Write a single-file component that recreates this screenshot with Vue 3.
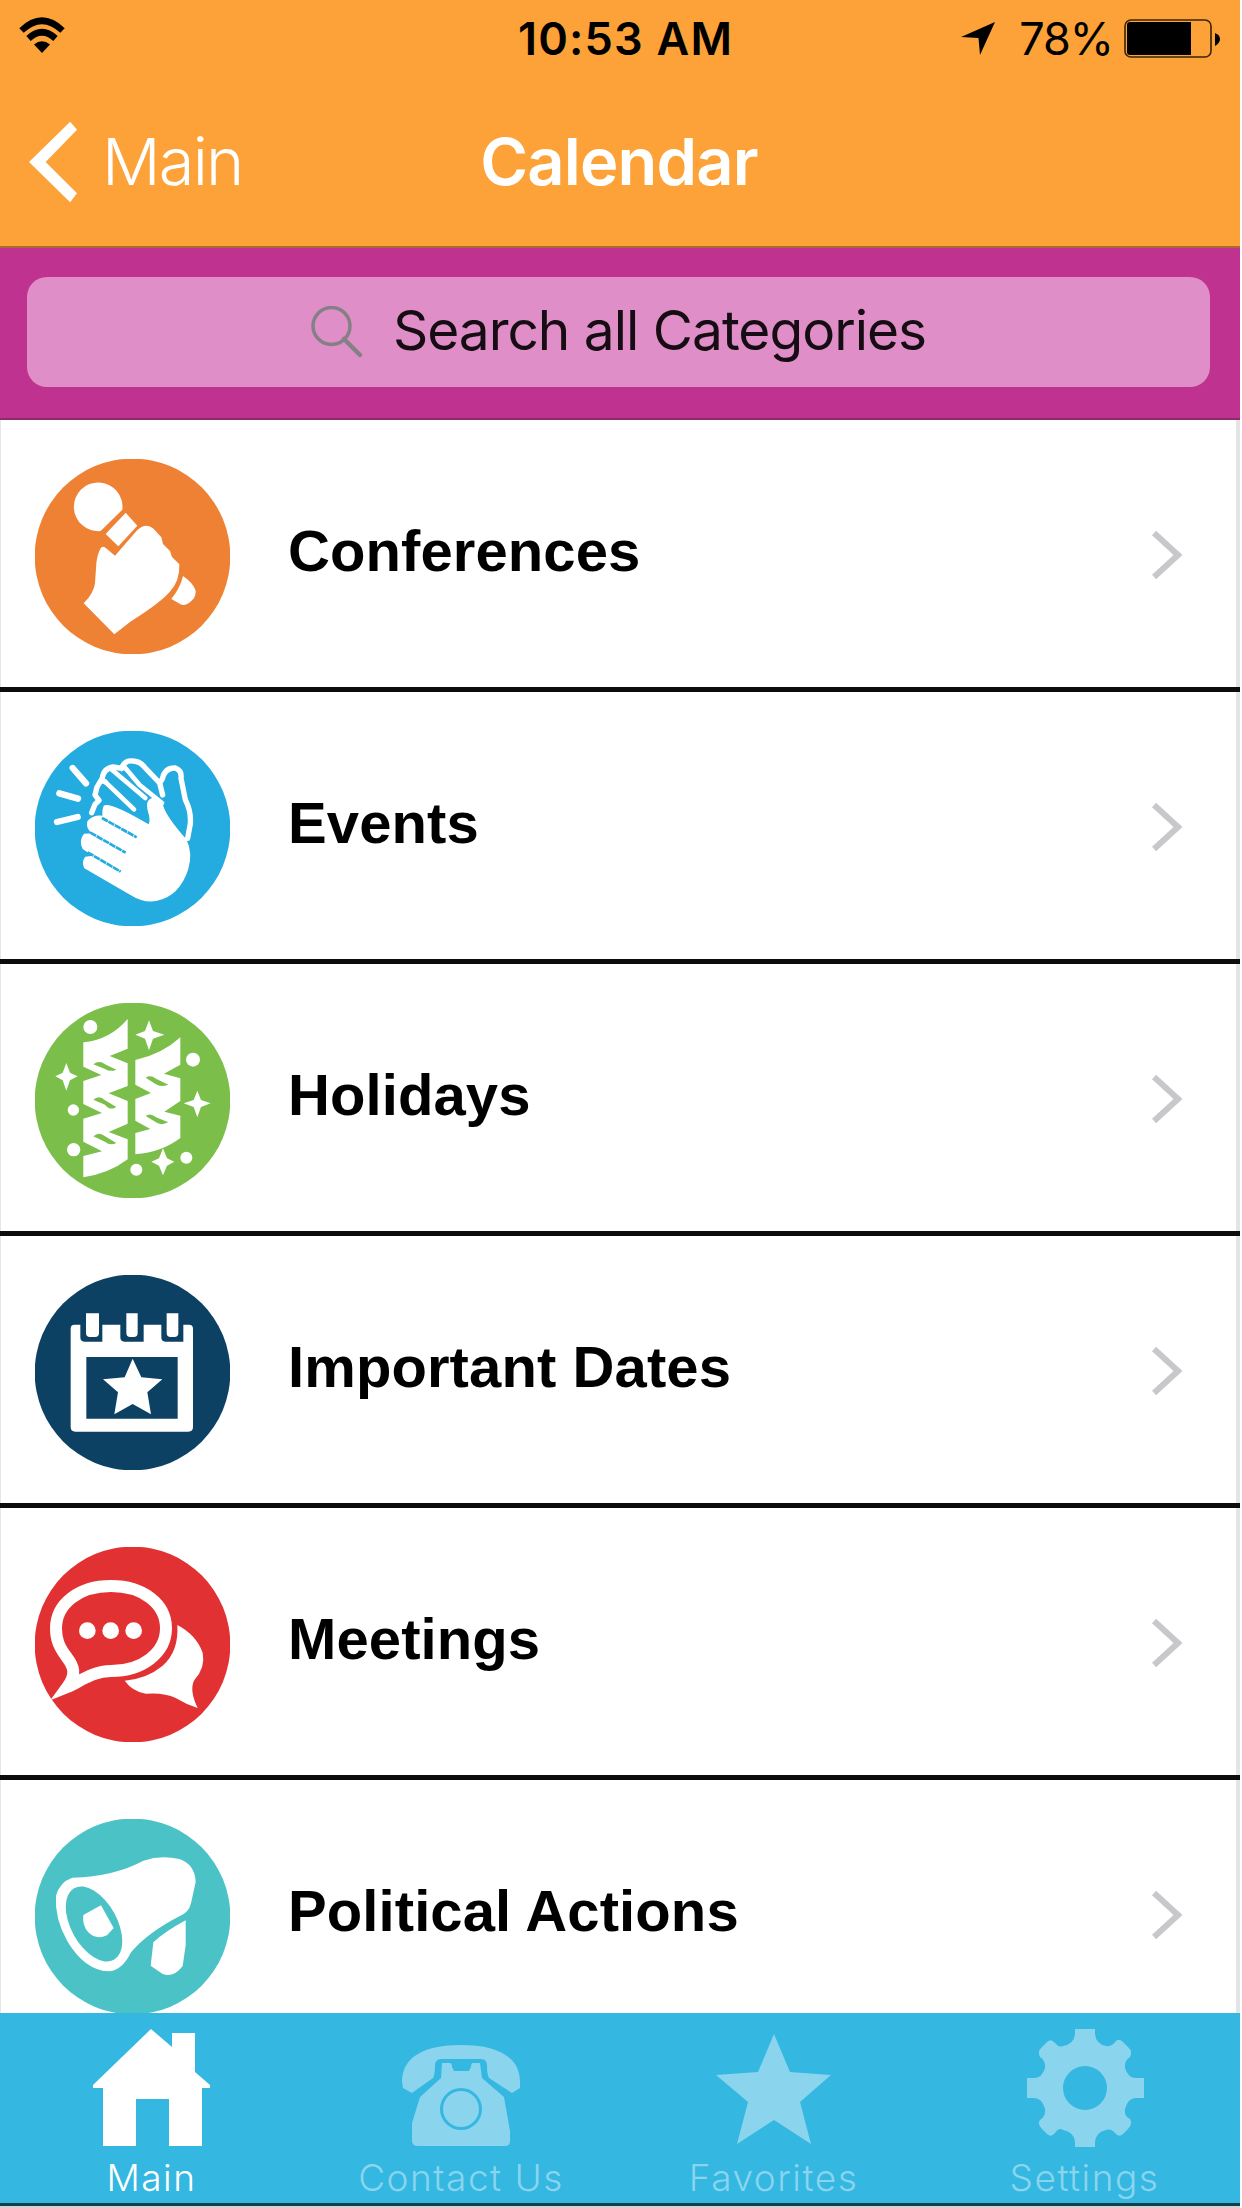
<script setup>
    import { ref } from 'vue';

    const categories = [
        { id: 'conferences', name: 'Conferences', color: '#ee8133', box: '106 89 585 585', cy: 381.5 },
        { id: 'events', name: 'Events', color: '#24abdf', box: '106 94 585 585', cy: 386.5 },
        { id: 'holidays', name: 'Holidays', color: '#7bbe4a', box: '106 100 585 585', cy: 392.5 },
        { id: 'dates', name: 'Important Dates', color: '#0c4163', box: '106 106 585 585', cy: 398.5 },
        { id: 'meetings', name: 'Meetings', color: '#e13133', box: '106 110 585 585', cy: 402.5 },
        { id: 'political', name: 'Political Actions', color: '#4bc2c5', box: '106 117 585 585', cy: 409.5 }
    ];

    const tabs = [
        { id: 'main', name: 'Main' },
        { id: 'contact', name: 'Contact Us' },
        { id: 'favorites', name: 'Favorites' },
        { id: 'settings', name: 'Settings' }
    ];

    const activeTab = ref('main');
</script>

<template>
  <div class="screen">
    <header class="header">
        <div class="status">
            <svg class="status__wifi" viewBox="0 0 46 36">
                <path d="M2.5 13.5Q23-6 43.500 13.500" fill="none" stroke="#000" stroke-width="6.500" />
                <path d="M9.500 21.500Q23 9 36.500 21.500" fill="none" stroke="#000" stroke-width="6.500" />
                <path d="M15 27.500Q23 21 31 27.500L23 36z" />
            </svg>
            <div class="status__time">10:53 AM</div>
            <div class="status__right">
                <svg class="status__arrow" viewBox="0 0 34 33">
                    <path d="M34 0L19 33 17.500 16 0 15z" />
                </svg>
                <span class="status__percent">78%</span>
                <svg class="status__battery" viewBox="0 0 96 40">
                    <rect x="1" y="1" width="86" height="37" rx="6" fill="none" stroke="#3a240a" stroke-width="1.600" />
                    <path d="M6 3H67V36H6Q3 36 3 33V6Q3 3 6 3z" />
                    <path d="M91 14Q96 16 96 20T91 27z" />
                </svg>
            </div>
        </div>
        <nav class="nav">
            <div class="nav__back">
                <svg class="nav__chevron" viewBox="0 0 50 82">
                    <path d="M42 0L49 8 17 41 49 73 42 82 0 41z" fill="#fff" />
                </svg>
                <span>Main</span>
            </div>
            <h1 class="nav__title">Calendar</h1>
        </nav>
    </header>

    <div class="search">
        <div class="search__field">
            <svg class="search__icon" viewBox="0 0 52 52">
                <circle cx="20.500" cy="20" r="18.500" fill="none" stroke="#858085" stroke-width="3.500" />
                <path d="M33 33L49 49" stroke="#858085" stroke-width="4.500" stroke-linecap="round" />
            </svg>
            <span class="search__text">Search all Categories</span>
        </div>
    </div>

    <main class="list">
        <div v-for="item in categories" :key="item.id" class="row">
            <svg class="row__icon" :viewBox="item.box">
                <circle cx="398.500" :cy="item.cy" r="293.500" :fill="item.color" />

                <g v-if="item.id === 'conferences'" fill="#fff">
                    <path d="M368 241A73 73 0 1 0 303 305Z" />
                    <path d="M378 250L413 289 356 351 318 314z" />
                    <path d="M413 302Q440 277 463 300L485 324 490 344 511 365 517 383 539 405Q541 455 510 488Q480 522 392 577L344 615 252 522Q282 493 286 462L290 402Q293 373 304 355Q312 347 323 360L346 379z" />
                    <path d="M550 440Q580 460 588 484Q589 499 580 510Q558 535 540 523L515 509Q542 475 550 440z" />
                </g>

                <g v-else-if="item.id === 'events'" fill="none" stroke="#fff" stroke-linecap="round" stroke-linejoin="round">
                    <path d="M219 205L259 251M179 281L235 297M172 367L234 352" stroke-width="19" />
                    <path d="M276 339L286 314 298 302 286 286 292 262 304 242 316 246M307 240Q311 205 341 202L366 206M366 207Q373 181 400 184Q422 185 437 205L480 250 488 238Q495 204 527 205Q547 212 544 236L557 300Q575 335 572 372L564 416M480 250L489 286" stroke-width="16" />
                    <path d="M316 246L403 329M334 208L437 295M375 203L420 256 487 310" stroke-width="14" />
                    <path d="M312 318Q330 305 447 374Q453 360 445 336Q434 299 463 293Q484 290 491 319Q500 351 560 419Q580 460 566 508Q540 590 470 604Q432 611 391 585L254 506Q244 485 257 471L279 468 249 448Q236 423 253 402L279 401Q257 389 263 365Q279 345 308 348Q306 331 312 318z" fill="#fff" stroke="none" />
                    <path d="M307 355L411 413M272 399L378 459M264 458L363 516" stroke="#24abdf" stroke-width="8" stroke-linecap="butt" stroke-dasharray="20 2" />
                </g>

                <g v-else-if="item.id === 'holidays'" fill="#fff">
                    <path d="M251 218Q330 211 384 148V237L330 259 384 281V349L327 371 384 394V462L327 487 384 509V569Q329 611 251 623V559L307 545 251 516V447L307 430 251 403V334L305 316 251 291z" />
                    <path d="M407 271Q487 254 542 203V285L493 312 542 326V394L494 426 542 438V505Q487 547 407 554V490L452 478 407 453V388L454 370 407 345z" />
                    <path d="M281 284Q299 270 316 284L350 300Q332 308 316 298zM281 390Q299 374 316 392L350 412Q332 424 316 405zM281 500Q299 484 316 500L350 520Q332 529 316 516zM438 324Q452 314 469 327L506 345Q484 354 469 344zM438 439Q452 428 469 443L506 458Q484 469 469 458z" fill="#7bbe4a" />
                    <path d="M448 152L460 184 494 195 460 207 448 242 436 207 407 195 436 184zM200 280L211 309 234 320 211 332 200 363 189 332 167 320 189 309zM593 363L604 391 633 401 604 412 593 443 582 412 552 401 582 391zM490 536L502 566 524 576 502 588 490 617 478 588 455 576 478 566z" />
                    <circle cx="272" cy="172" r="21" />
                    <circle cx="580" cy="270" r="21" />
                    <circle cx="221" cy="421" r="17" />
                    <circle cx="222" cy="540" r="20" />
                    <circle cx="410" cy="600" r="18" />
                    <circle cx="560" cy="564" r="18" />
                </g>

                <g v-else-if="item.id === 'dates'" fill="#fff">
                    <path fill-rule="evenodd" d="M224 255H242V293Q242 306 254 306H308V255H362V293Q362 306 374 306H432V255H485V293Q485 306 497 306H551V255H568Q580 255 580 267V562Q580 576 566 576H227Q213 576 213 562V267Q213 255 224 255zM260 352V537H534V352z" />
                    <path d="M259 221H298V280Q298 292 286 292H271Q259 292 259 280zM380 221H414V280Q414 292 402 292H392Q380 292 380 280zM501 221H536V280Q536 292 524 292H513Q501 292 501 280z" />
                    <path d="M399 357L425 413 488 419 443 458 454 524 399 493 344 524 355 458 310 419 375 413z" />
                </g>

                <g v-else-if="item.id === 'meetings'" fill="#fff">
                    <path d="M334 227C430 227 499 280 499 354C499 428 427 482 334 482C278 482 238 516 203 530C232 490 222 468 200 439C178 409 169 388 169 354C169 280 238 227 334 227z" fill="none" stroke="#fff" stroke-width="36" />
                    <path d="M225 486Q219 518 174 552Q207 550 245 524z" />
                    <circle cx="263" cy="361" r="25" />
                    <circle cx="333" cy="361" r="25" />
                    <circle cx="402" cy="361" r="25" />
                    <path d="M533 344Q590 374 609 427Q618 472 584 509Q568 540 594 593Q557 581 528 563Q494 546 438 550Q398 543 375 511Q442 505 489 466Q538 423 533 344z" />
                </g>

                <g v-else fill="#fff">
                    <path d="M218 293Q345 289 431 242Q484 224 539 237Q586 253 588 306L574 370Q567 398 542 407Q444 457 394 517Q367 573 326 574Q255 570 204 485Q164 415 169 347Q180 306 218 293z" />
                    <ellipse cx="283" cy="432" rx="69" ry="123" transform="rotate(-29 283 432)" fill="#4bc2c5" />
                    <path d="M304 376L342 444 322 466Q289 481 266 457Q247 436 251 405z" />
                    <path d="M558 421V496L549 558Q522 594 489 582L453 557 461 487Q495 455 558 421z" />
                </g>
            </svg>
            <span class="row__name">{{ item.name }}</span>
            <svg class="row__chevron" viewBox="0 0 30 50">
                <path d="M2 3L26 25 2 47" fill="none" stroke="#c7c7cc" stroke-width="6" />
            </svg>
        </div>
    </main>

    <footer class="tabs">
        <div
            v-for="tab in tabs"
            :key="tab.id"
            class="tab"
            :class="[`tab--${tab.id}`, { 'tab--active': tab.id === activeTab }]"
            @click="activeTab = tab.id"
        >
            <svg class="tab__icon" viewBox="0 0 118 118">
                <path v-if="tab.id === 'main'" d="M58 0L79 18V4H102V43L117 56V59H109V117H76V70H43V117H10V59H0V56z" />
                <g v-else-if="tab.id === 'contact'">
                    <path d="M0 53C0 28 22 16 59 16S118 28 118 53V59L110 64 87 49Q85 45 85 37Q85 30 79 30H39Q33 30 33 37Q33 45 31 49L10 64 1 59z" />
                    <path fill-rule="evenodd" d="M40 34H48Q50 34 50 38L52 42H67L69 38Q69 34 71 34H78L80 49 102 68 108 102V112Q108 117 103 117H16Q10 117 10 112V94L18 68 39 49zM59 59A21 21 0 1 0 59 101A21 21 0 1 0 59 59z" />
                    <circle cx="59" cy="80" r="18" />
                </g>
                <path v-else-if="tab.id === 'favorites'" d="M59 5L75 43 116 46 85 73 96 115 59 91 22 115 33 73 1 46 43 43z" />
                <path v-else fill-rule="evenodd" d="M49 0H69V5Q70 15 80 17Q86 18 90 12Q93 9 97 13L102 18Q107 22 104 28Q98 32 99 39Q102 49 110 49H118V69H110Q102 69 99 80Q98 87 104 90Q107 95 102 100L97 105Q93 109 89 104Q85 99 80 101Q70 103 69 113V118H49V113Q48 103 37 101Q33 98 29 104Q25 109 21 105L16 100Q11 95 14 91Q20 87 19 80Q16 69 8 69H1V49H8Q16 49 19 39Q20 32 14 28Q11 22 16 18L21 13Q25 9 29 14Q33 19 37 17Q48 15 49 5zM59 37A22 22 0 1 0 59 81A22 22 0 1 0 59 37z" />
            </svg>
            <span class="tab__name">{{ tab.name }}</span>
        </div>
    </footer>
  </div>
</template>

<style>
    body {
        background-color: #fff;
    }
</style>

<style scoped>
    .screen {
        display: flex;
        flex-direction: column;
        box-sizing: border-box;
        width: 1240px;
        height: 2208px;
        overflow: hidden;
        border-bottom: 2px solid #d5d5d5;
        font-family: Inter, "Liberation Sans", sans-serif;
        background: linear-gradient(to right, #e6e6e6 1px, #fff 1px, #fff 1236px, #e4e4e4 1236px);
    }
    .header {
        box-sizing: border-box;
        flex: none;
        height: 248px;
        background-color: #fca238;
        border-bottom: 2px solid #a9692f;
    }
    .status {
        display: grid;
        grid-template-columns: 1fr auto 1fr;
        align-items: center;
        height: 77px;
        padding: 0 20px 0 19px;
        color: #000;
    }
    .status__wifi {
        width: 46px;
        height: 36px;
        margin-top: -8px;
    }
    .status__time {
        margin-left: 12px;
        font-size: 45px;
        font-weight: 600;
        letter-spacing: 1.2px;
        white-space: nowrap;
    }
    .status__right {
        display: flex;
        align-items: center;
        justify-content: flex-end;
    }
    .status__arrow {
        width: 34px;
        height: 33px;
        margin-right: 24px;
    }
    .status__percent {
        margin-right: 11px;
        font-size: 45px;
        letter-spacing: -1px;
    }
    .status__battery {
        width: 96px;
        height: 40px;
    }
    .nav {
        display: grid;
        grid-template-columns: 1fr auto 1fr;
        align-items: center;
        height: 170px;
        padding: 0 31px 0 29px;
        color: #fff;
        font-size: 65px;
        line-height: 80px;
    }
    .nav__back {
        display: flex;
        align-items: center;
        gap: 24px;
        font-weight: 350;
        letter-spacing: -1.8px;
    }
    .nav__chevron {
        width: 49px;
        height: 82px;
    }
    .nav__title {
        margin: 0;
        font-size: 65px;
        font-weight: 600;
        letter-spacing: -0.8px;
    }
    .search {
        box-sizing: border-box;
        flex: none;
        height: 172px;
        padding: 29px 30px 31px 27px;
        background-color: #bf328f;
        border-bottom: 2px solid #8d2a6c;
    }
    .search__field {
        display: flex;
        align-items: center;
        justify-content: center;
        gap: 30px;
        height: 110px;
        border-radius: 20px;
        background-color: #df8ec7;
    }
    .search__icon {
        width: 52px;
        height: 52px;
    }
    .search__text {
        margin-top: -5px;
        font-size: 55px;
        letter-spacing: -1px;
        color: #150d13;
    }
    .list {
        height: 1593px;
        overflow: hidden;
    }
    .row {
        display: flex;
        align-items: center;
        box-sizing: border-box;
        height: 272px;
        padding: 6px 58px 0 35px;
        border-bottom: 5px solid #0c0c0c;
    }
    .row__icon {
        flex: none;
        width: 195px;
        height: 195px;
    }
    .row__name {
        flex: 1;
        margin: -12px 0 0 58px;
        font-family: "Liberation Sans", Arial, sans-serif;
        font-size: 58px;
        font-weight: 700;
        letter-spacing: 0.1px;
        color: #000;
    }
    .row__chevron {
        width: 30px;
        height: 50px;
        margin-top: -4px;
    }
    .tabs {
        display: flex;
        box-sizing: border-box;
        flex: none;
        height: 193px;
        padding-right: 4px;
        background-color: #34b7e0;
        border-bottom: 3px solid #143c4b;
    }
    .tab {
        display: flex;
        flex: none;
        flex-direction: column;
        align-items: center;
        box-sizing: border-box;
        width: 311px;
        padding-top: 16px;
        color: #8ad4ee;
        fill: #8ad4ee;
        cursor: pointer;
    }
    .tab--main {
        margin-left: -4px;
    }
    .tab--contact {
        padding-right: 3px;
    }
    .tab--active {
        color: #fff;
        fill: #fff;
    }
    .tab__icon {
        width: 118px;
        height: 118px;
    }
    .tab__name {
        margin-top: 7px;
        font-size: 37px;
        font-weight: 350;
        line-height: 48px;
        letter-spacing: 1.5px;
        white-space: nowrap;
    }
</style>
